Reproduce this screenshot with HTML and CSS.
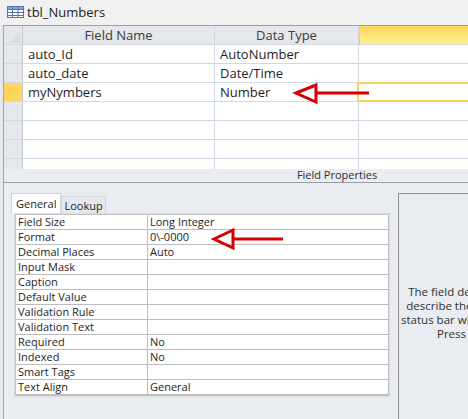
FILE: index.html
```html
<!DOCTYPE html>
<html lang="en">
  <head>
    <meta charset="UTF-8">
    <title>tbl_Numbers</title>
    <link rel="stylesheet" href="styles.css">
  </head>
  <body>
    <div class="window">
      <div class="titlebar">
        <svg class="table-icon" width="17" height="12" viewBox="0 0 17 12">
          <rect x="0.5" y="0.5" width="16" height="11" fill="#fff" stroke="#4f77b8"/>
          <rect x="1" y="1" width="15" height="2" fill="#86a6da"/>
          <path d="M1 3.5H16M1 6.5H16M1 9.5H16M5.5 1V11M11 1V11" stroke="#4f77b8" fill="none"/>
        </svg>
        <span>tbl_Numbers</span>
      </div>

      <div class="pane">
        <div class="design">
          <div class="row head">
            <div class="cell sel corner">
              <svg width="12" height="12" viewBox="0 0 12 12"><polygon points="1,12 12,1 12,12" fill="#d9dde3"/></svg>
            </div>
            <div class="cell">Field Name</div>
            <div class="cell">Data Type</div>
            <div class="cell desc-head"></div>
          </div>
          <div class="row">
            <div class="cell sel"></div>
            <div class="cell">auto_Id</div>
            <div class="cell">AutoNumber</div>
            <div class="cell"></div>
          </div>
          <div class="row">
            <div class="cell sel"></div>
            <div class="cell">auto_date</div>
            <div class="cell">Date/Time</div>
            <div class="cell"></div>
          </div>
          <div class="row">
            <div class="cell sel current"></div>
            <div class="cell">myNymbers</div>
            <div class="cell">Number</div>
            <div class="cell"><div class="focus-box"></div></div>
          </div>
          <div class="row"><div class="cell sel"></div><div class="cell"></div><div class="cell"></div><div class="cell"></div></div>
          <div class="row"><div class="cell sel"></div><div class="cell"></div><div class="cell"></div><div class="cell"></div></div>
          <div class="row"><div class="cell sel"></div><div class="cell"></div><div class="cell"></div><div class="cell"></div></div>
          <div class="row"><div class="cell sel"></div><div class="cell"></div><div class="cell"></div><div class="cell"></div></div>
        </div>

        <div class="props-label">Field Properties</div>

        <div class="props">
          <div class="props-left">
            <div class="tabs">
              <span class="tab active">General</span>
              <span class="tab">Lookup</span>
            </div>
            <div class="prop-grid">
              <div class="prop"><span>Field Size</span><span>Long Integer</span></div>
              <div class="prop"><span>Format</span><span>0\-0000</span></div>
              <div class="prop"><span>Decimal Places</span><span>Auto</span></div>
              <div class="prop"><span>Input Mask</span><span></span></div>
              <div class="prop"><span>Caption</span><span></span></div>
              <div class="prop"><span>Default Value</span><span></span></div>
              <div class="prop"><span>Validation Rule</span><span></span></div>
              <div class="prop"><span>Validation Text</span><span></span></div>
              <div class="prop"><span>Required</span><span>No</span></div>
              <div class="prop"><span>Indexed</span><span>No</span></div>
              <div class="prop"><span>Smart Tags</span><span></span></div>
              <div class="prop"><span>Text Align</span><span>General</span></div>
            </div>
          </div>
          <div class="help">
            The field description is optional. It helps you<br>
            describe the field and is also displayed in the<br>
            status bar when you select this field on a form.<br>
            Press F1 for help on descriptions.
          </div>
        </div>
      </div>

      <!-- annotation arrows drawn over the screenshot -->
      <svg class="arrows" width="468" height="419" viewBox="0 0 468 419">
        <g stroke="#d40000" stroke-width="3" fill="none">
          <polygon points="296,93 316,85 316,102"/>
          <line x1="316" y1="93" x2="369" y2="93"/>
          <polygon points="214,239 233,230 233,248"/>
          <line x1="233" y1="239" x2="283" y2="239"/>
        </g>
      </svg>
    </div>
  </body>
</html>
```

FILE: styles.css
```css
body {
  margin: 0;
  width: 468px;
  height: 419px;
  overflow: hidden;
  background-color: #e6e8eb;
  font-family: "Open Sans", sans-serif;
  color: #1e1e1e;
}

.window {
  position: relative;
  width: 670px;
  height: 419px;
}

.titlebar {
  height: 25px;
  box-sizing: border-box;
  display: flex;
  align-items: center;
  padding-left: 7px;
  padding-bottom: 2px;
  background-color: #f0f0f0;
  font-size: 13px;
}

.table-icon {
  margin-right: 3px;
}

.pane {
  margin-left: 3px;
  border-left: 1px solid #a3a6aa;
}

.design {
  height: 144px;
  overflow: hidden;
  background-color: #fff;
  border-top: 1px solid #a0a0a0;
  box-sizing: border-box;
}

.row {
  display: grid;
  grid-template-columns: 19px 192px 144px 1fr;
  height: 19px;
}

.cell {
  box-sizing: border-box;
  border-right: 1px solid #d0d7e5;
  border-bottom: 1px solid #d0d7e5;
  padding: 0 5px;
  font-size: 13px;
  line-height: 18px;
  white-space: nowrap;
  position: relative;
}

.head .cell {
  background-color: #e4e7eb;
  text-align: center;
  color: #3b3b3b;
  border-bottom-color: #d5d9de;
}

.head .desc-head {
  background: linear-gradient(#fed65c, #fff08e);
  border-left: 1px solid #c9ced6;
}

.sel {
  background-color: #e4e7ec;
  border-right-color: #c2c7ce;
  padding: 0;
}

.corner svg {
  position: absolute;
  left: 4px;
  top: 5px;
}

.sel.current {
  background-color: #ffd65c;
}

.focus-box {
  position: absolute;
  left: -2px;
  top: -1px;
  right: 0;
  bottom: -1px;
  border: 2px solid #f5d35c;
}

.props-label {
  height: 14px;
  box-sizing: border-box;
  border-bottom: 1px solid #9a9da1;
  background-color: #e9ecf0;
  text-align: center;
  font-size: 11px;
  line-height: 12px;
  color: #2e2e3a;
}

.props {
  display: flex;
  background-color: #e9ecf0;
  height: 240px;
  padding-top: 10px;
}

.props-left {
  width: 383px;
  padding-left: 7px;
}

.tabs {
  display: flex;
  align-items: flex-end;
  height: 21px;
}

.tab {
  box-sizing: border-box;
  height: 18px;
  padding: 0 2px;
  font-size: 11px;
  line-height: 17px;
  border: 1px solid #d4d7dc;
  border-bottom: none;
  background-color: #e5e8ec;
}

.tab.active {
  height: 21px;
  line-height: 20px;
  padding: 0 4px;
  background-color: #fff;
  border-color: #d0d3d8;
}

.prop-grid {
  width: 374px;
  margin-left: 4px;
  box-sizing: border-box;
  background-color: #fff;
  border: 1px solid #c4c4c4;
  outline: 1px solid #dcdcdc;
}

.prop {
  display: grid;
  grid-template-columns: 131px 1fr;
  height: 15px;
  box-sizing: border-box;
  border-bottom: 1px solid #bcbcbc;
  font-size: 11px;
  line-height: 14px;
}

.prop span {
  padding-left: 2px;
  white-space: nowrap;
}

.prop span + span {
  border-left: 1px solid #bcbcbc;
}

.help {
  margin-left: 4px;
  width: 256px;
  box-sizing: border-box;
  border: 1px solid #8e9094;
  padding-top: 91px;
  text-align: center;
  font-size: 11.5px;
  line-height: 14px;
  color: #333;
  white-space: nowrap;
}

.arrows {
  position: absolute;
  left: 0;
  top: 0;
  pointer-events: none;
}
```
